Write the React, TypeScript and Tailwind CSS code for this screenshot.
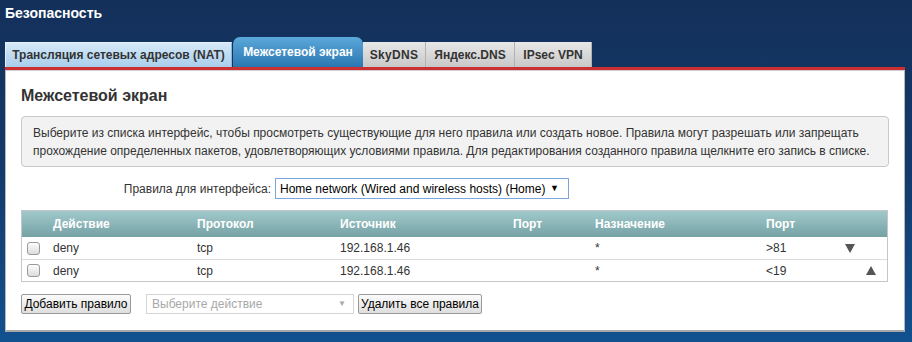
import React from "react";

const Down = ({ c = "#555" }: { c?: string }) => (
  <svg width="10" height="9" viewBox="0 0 10 9"><polygon points="0,0 10,0 5,9" fill={c} /></svg>
);
const Up = ({ c = "#555" }: { c?: string }) => (
  <svg width="10" height="9" viewBox="0 0 10 9"><polygon points="0,9 10,9 5,0" fill={c} /></svg>
);

const Checkbox = () => (
  <div className="h-[13px] w-[13px] rounded-[3px] border border-[#9a9a9a] bg-gradient-to-b from-[#fdfdfd] to-[#dcdcdc]" />
);

const cols = "grid grid-cols-[25px_144px_143px_173px_82px_171px_80px_47px]";

const rows = [
  { a: "deny", p: "tcp", s: "192.168.1.46", sp: "", d: "*", dp: ">81", dir: "down" },
  { a: "deny", p: "tcp", s: "192.168.1.46", sp: "", d: "*", dp: "<19", dir: "up" },
];

export default function App() {
  return (
    <div className="min-h-[342px] w-full bg-gradient-to-b from-[#13305a] via-[#133a6c] to-[#11518f] font-['Liberation_Sans',Arial,sans-serif] text-[12px]">
      <div className="h-[37px] pl-[5px] pt-[5px] text-[14px] font-bold leading-[17px] text-white">
        Безопасность
      </div>
      <div className="flex h-[30px] items-end pl-[5px]">
        <div className="flex h-[25px] w-[227px] items-center justify-center border-l border-t border-r border-l-[#e6f1fa] border-t-[#e6f1fa] border-r-[#8fb4d4] bg-gradient-to-b from-[#d6e9f8] to-[#a8ceec] font-bold text-[#333]">
          Трансляция сетевых адресов (NAT)
        </div>
        <div className="ml-[1px] flex h-[30px] w-[130px] items-center justify-center rounded-t-[7px] bg-gradient-to-b from-[#5ba8da] to-[#2b77b2] font-bold text-white">
          Межсетевой экран
        </div>
        <div className="flex h-[25px] w-[63px] items-center justify-center border-r border-[#b2b2b2] bg-gradient-to-b from-[#e8e8e8] to-[#c8c8c8] font-bold tracking-[0.3px] text-[#333]">
          SkyDNS
        </div>
        <div className="flex h-[25px] w-[89px] items-center justify-center border-r border-[#b2b2b2] bg-gradient-to-b from-[#e8e8e8] to-[#c8c8c8] font-bold text-[#333]">
          Яндекс.DNS
        </div>
        <div className="flex h-[25px] w-[77px] items-center justify-center border-r border-[#b2b2b2] bg-gradient-to-b from-[#e8e8e8] to-[#c8c8c8] font-bold text-[#333]">
          IPsec VPN
        </div>
      </div>
      <div className="ml-[5px] h-[3px] w-[900px] bg-[#cc2f31]" />
      <div className="ml-[5px] w-[900px] border-t border-r border-b-2 border-l border-t-[#d0d0d0] border-r-[#b8b8b8] border-b-[#a8a8a8] border-l-[#b8b8b8] bg-white px-[15px] pb-[16px] pt-[15px]">
        <div className="h-[20px] text-[16px] font-bold leading-[20px] text-[#333]">Межсетевой экран</div>
        <div className="mt-[10px] w-[868px] rounded-[4px] border border-[#c8c8c8] bg-[#f2f2f2] pb-[6px] pl-[11px] pr-[8px] pt-[7px] leading-[18px] text-[#333]">
          Выберите из списка интерфейс, чтобы просмотреть существующие для него правила или создать новое. Правила могут разрешать или запрещать прохождение определенных пакетов, удовлетворяющих условиями правила. Для редактирования созданного правила щелкните его запись в списке.
        </div>
        <div className="mt-[11px] flex h-[21px] items-center">
          <div className="w-[250px] text-right text-[#333]">Правила для интерфейса:</div>
          <div className="ml-[4px] flex h-[21px] w-[294px] items-center justify-between border border-[#7aa5dd] bg-white pl-[4px] pr-[9px] text-black">
            <span>Home network (Wired and wireless hosts) (Home)</span>
            <span className="text-[9px]">▼</span>
          </div>
        </div>
        <div className="mt-[11px] w-[867px] border border-[#c6c6c6]">
          <div className={`${cols} h-[26px] items-center bg-gradient-to-b from-[#a1c9cb] to-[#75a2a5] font-bold text-white`}>
            <div />
            <div className="pl-[6px]">Действие</div>
            <div className="pl-[6px]">Протокол</div>
            <div className="pl-[6px]">Источник</div>
            <div className="pl-[6px]">Порт</div>
            <div className="pl-[6px]">Назначение</div>
            <div className="pl-[6px]">Порт</div>
            <div />
          </div>
          {rows.map((r, i) => (
            <div key={i} className={`${cols} h-[22px] items-center text-[#333] ${i > 0 ? "border-t border-[#dcdcdc]" : ""}`}>
              <div className="pl-[5px]"><Checkbox /></div>
              <div className="pl-[6px]">{r.a}</div>
              <div className="pl-[6px]">{r.p}</div>
              <div className="pl-[6px]">{r.s}</div>
              <div className="pl-[6px]">{r.sp}</div>
              <div className="pl-[6px]">{r.d}</div>
              <div className="pl-[6px]">{r.dp}</div>
              <div className="flex items-center gap-[11px] pl-[5px]">
                <span className={r.dir === "down" ? "" : "invisible"}><Down /></span>
                <span className={r.dir === "up" ? "" : "invisible"}><Up /></span>
              </div>
            </div>
          ))}
        </div>
        <div className="mt-[12px] flex h-[20px] items-center">
          <button className="h-[20px] w-[110px] rounded-[2px] border border-[#999] bg-gradient-to-b from-[#fbfbfb] to-[#dedede] text-[12px] leading-[18px] text-black">
            Добавить правило
          </button>
          <div className="ml-[15px] flex h-[20px] w-[208px] items-center justify-between border border-[#d6d6d6] bg-white pl-[5px] pr-[7px] text-[#a8a8a8]">
            <span>Выберите действие</span>
            <span className="text-[8px]">▼</span>
          </div>
          <button className="ml-[4px] h-[20px] w-[124px] rounded-[2px] border border-[#999] bg-gradient-to-b from-[#fbfbfb] to-[#dedede] text-[12px] leading-[18px] text-black">
            Удалить все правила
          </button>
        </div>
      </div>
    </div>
  );
}
